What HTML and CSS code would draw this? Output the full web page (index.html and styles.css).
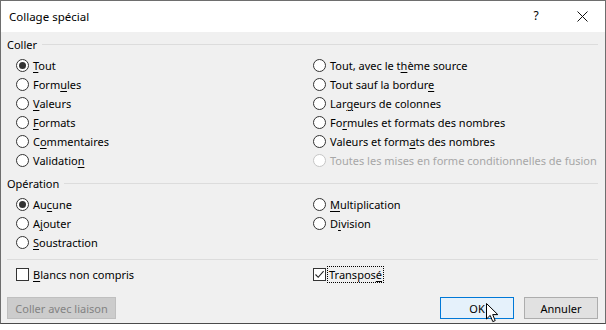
FILE: index.html
```html
<!DOCTYPE html>
<html lang="fr">
<head>
    <meta charset="UTF-8">
    <title>Collage spécial</title>
    <link rel="stylesheet" href="styles.css">
</head>
<body>
    <div class="dialog">
        <div class="titlebar">
            <span class="title">Collage spécial</span>
            <span class="help">?</span>
            <span class="close">
                <svg width="11" height="11" viewBox="0 0 11 11"><path d="M0.5 0.5L10.5 10.5M10.5 0.5L0.5 10.5" stroke="#111" stroke-width="1" fill="none"/></svg>
            </span>
        </div>

        <div class="content">
            <!-- Coller -->
            <div class="group-head"><span>Coller</span></div>
            <div class="options">
                <div class="col">
                    <label class="opt"><span class="radio checked"></span><span><u>T</u>out</span></label>
                    <label class="opt"><span class="radio"></span><span>Form<u>u</u>les</span></label>
                    <label class="opt"><span class="radio"></span><span><u>V</u>aleurs</span></label>
                    <label class="opt"><span class="radio"></span><span><u>F</u>ormats</span></label>
                    <label class="opt"><span class="radio"></span><span>C<u>o</u>mmentaires</span></label>
                    <label class="opt"><span class="radio"></span><span>Validatio<u>n</u></span></label>
                </div>
                <div class="col">
                    <label class="opt"><span class="radio"></span><span>Tout, avec le t<u>h</u>ème source</span></label>
                    <label class="opt"><span class="radio"></span><span>Tout sauf la bordur<u>e</u></span></label>
                    <label class="opt"><span class="radio"></span><span>Lar<u>g</u>eurs de colonnes</span></label>
                    <label class="opt"><span class="radio"></span><span>Fo<u>r</u>mules et formats des nombres</span></label>
                    <label class="opt"><span class="radio"></span><span>Valeurs et form<u>a</u>ts des nombres</span></label>
                    <label class="opt disabled"><span class="radio"></span><span>Toutes les mises en forme conditionnelles de fusion</span></label>
                </div>
            </div>

            <!-- Opération -->
            <div class="group-head second"><span>Opération</span></div>
            <div class="options">
                <div class="col">
                    <label class="opt"><span class="radio checked"></span><span>Au<u>c</u>une</span></label>
                    <label class="opt"><span class="radio"></span><span>A<u>j</u>outer</span></label>
                    <label class="opt"><span class="radio"></span><span><u>S</u>oustraction</span></label>
                </div>
                <div class="col">
                    <label class="opt"><span class="radio"></span><span><u>M</u>ultiplication</span></label>
                    <label class="opt"><span class="radio"></span><span>D<u>i</u>vision</span></label>
                </div>
            </div>

            <div class="separator"></div>

            <div class="options">
                <div class="col">
                    <label class="opt"><span class="check"></span><span><u>B</u>lancs non compris</span></label>
                </div>
                <div class="col">
                    <label class="opt"><span class="check">
                        <svg width="11" height="11" viewBox="0 0 11 11"><path d="M1.5 5.5L4.2 8.3L9.6 2.2" stroke="#222" stroke-width="1.1" fill="none"/></svg>
                    </span><span class="focus">Transpos<u>é</u></span></label>
                </div>
            </div>

            <div class="buttons">
                <button class="btn disabled">Coller avec liaison</button>
                <div class="btn-group">
                    <button class="btn default">OK</button>
                    <button class="btn">Annuler</button>
                </div>
            </div>
        </div>

        <!-- mouse pointer over OK -->
        <svg class="cursor" width="13" height="20" viewBox="0 0 13 20">
            <path d="M0.5 0.5L0.5 16L4.2 12.4L6.8 18.6L9.2 17.6L6.7 11.6L11.8 11.6Z" fill="#fff" stroke="#000" stroke-width="1"/>
        </svg>
    </div>
    <div class="sheet"></div>
</body>
</html>
```

FILE: styles.css
```css
body {
    margin: 0;
    padding: 0;
    background-color: #fff;
    font-family: "Noto Sans", "Open Sans", sans-serif;
    font-size: 11px;
    color: #000;
}

/* Dialog window */
.dialog {
    position: relative;
    width: 604px;
    height: 322px;
    border: 1px solid #6e6e6e;
    border-bottom-color: #4a4a4a;
    background-color: #f0f0f0;
}

.titlebar {
    display: flex;
    align-items: center;
    height: 31px;
    background-color: #fff;
    padding-left: 8px;
}

.title {
    flex: 1;
    font-size: 11.5px;
    padding-bottom: 1px;
}

.help {
    width: 46px;
    text-align: center;
    font-size: 12px;
    padding-bottom: 2px;
}

.close {
    width: 46px;
    display: flex;
    justify-content: center;
    padding-bottom: 1px;
}

/* Body of the dialog */
.content {
    padding: 5px 7px 0 6px;
}

.group-head {
    display: flex;
    align-items: center;
    height: 17px;
    margin-bottom: 2px;
}

.group-head span {
    padding-right: 5px;
    padding-bottom: 3px;
}

.group-head::after {
    content: "";
    flex: 1;
    border-top: 1px solid #dcdcdc;
    margin-top: -2px;
}

.group-head.second {
    margin-top: 6px;
}

.options {
    display: flex;
    padding-left: 9px;
}

.col {
    display: flex;
    flex-direction: column;
}

.col:first-child {
    width: 297px;
}

.opt {
    display: flex;
    align-items: center;
    gap: 4px;
    height: 19px;
    white-space: nowrap;
}

.opt u {
    text-underline-offset: 2px;
}

.opt.disabled {
    color: #a7a7a7;
}

/* Radio buttons */
.radio {
    position: relative;
    box-sizing: border-box;
    width: 13px;
    height: 13px;
    border: 1px solid #333;
    border-radius: 50%;
    background-color: #fff;
}

.radio.checked::after {
    content: "";
    position: absolute;
    left: 2px;
    top: 2px;
    width: 7px;
    height: 7px;
    border-radius: 50%;
    background-color: #333;
}

.disabled .radio {
    border-color: #c6c6c6;
}

/* Check boxes */
.check {
    display: flex;
    align-items: center;
    justify-content: center;
    box-sizing: border-box;
    width: 13px;
    height: 13px;
    border: 1px solid #333;
    background-color: #fff;
}

.focus {
    outline: 1px dotted #000;
    outline-offset: 0;
    padding: 0 1px;
    line-height: 15px;
    margin-left: -2px;
}

.separator {
    border-top: 1px solid #dcdcdc;
    margin: 7px 0 5px 0;
}

/* Bottom buttons */
.buttons {
    display: flex;
    justify-content: space-between;
    margin-top: 13px;
}

.btn-group {
    display: flex;
    gap: 10px;
}

.btn {
    box-sizing: border-box;
    width: 74px;
    height: 22px;
    padding: 0;
    font-family: "Noto Sans", "Open Sans", sans-serif;
    font-size: 11px;
    color: #000;
    background-color: #e1e1e1;
    border: 1px solid #adadad;
}

.btn.disabled {
    width: 109px;
    color: #838383;
    background-color: #cccccc;
    border-color: #bfbfbf;
}

.btn.default {
    background-color: #e5f1fb;
    border-color: #0078d7;
}

.cursor {
    position: absolute;
    left: 485px;
    top: 302px;
}

.sheet {
    height: 7px;
    background-color: #fff;
}
```
